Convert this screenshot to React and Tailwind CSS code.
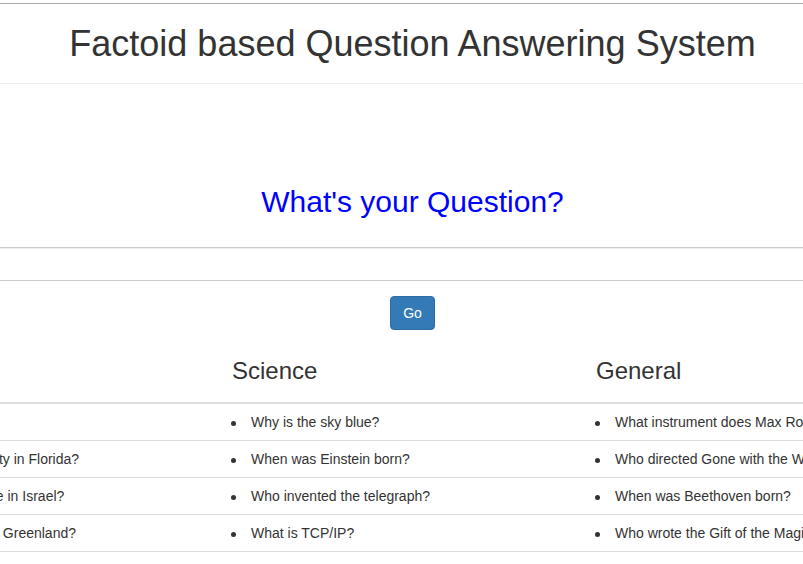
export default function App() {
  const rows = [
    ["Where is Ontario?", "Why is the sky blue?", "What instrument does Max Roach play?"],
    ["What is the largest city in Florida?", "When was Einstein born?", "Who directed Gone with the Wind?"],
    ["What is the time zone in Israel?", "Who invented the telegraph?", "When was Beethoven born?"],
    ["What is the capital of Greenland?", "What is TCP/IP?", "Who wrote the Gift of the Magi?"],
  ];
  const heads = ["Geography", "Science", "General"];
  return (
    <div className="w-[803px] h-[564px] overflow-hidden bg-white text-[#333] font-['Liberation_Sans',Arial,sans-serif] text-[14px]">
      <div className="ml-[-200px] w-[1225px] pt-[3px]">
        <div className="border-t border-[#aaa]">
          <h1 className="mt-[20px] text-[36px] leading-[40px] text-center font-normal">
            Factoid based Question Answering System
          </h1>
          <div className="mt-[19px] border-t border-[#eee]" />
          <h2 className="mt-[101px] text-[30px] leading-[33px] text-center text-[#0000ff] font-normal">
            What's your Question?
          </h2>
          <input
            type="text"
            className="mt-[29px] block w-full h-[34px] border border-[#ccc] rounded-[4px] bg-white shadow-[inset_0_1px_1px_rgba(0,0,0,0.075)] px-3 outline-none"
          />
          <div className="mt-[15px] flex justify-center">
            <button className="h-[34px] px-[12px] bg-[#337ab7] border border-[#2e6da4] rounded-[4px] text-white text-[14px] leading-[20px]">
              Go
            </button>
          </div>
          <div className="ml-[42px] w-[1141px]">
            <div className="grid grid-cols-[382px_364px_395px] border-b-2 border-[#ddd]">
              {heads.map((h) => (
                <div key={h} className="p-2">
                  <h3 className="mt-5 mb-[10px] text-[24px] leading-[26px] font-normal">{h}</h3>
                </div>
              ))}
            </div>
            {rows.map((r, i) => (
              <div key={i} className="grid grid-cols-[382px_364px_395px] border-b border-[#ddd]">
                {r.map((c, j) => (
                  <div key={j} className="py-2 pl-[7px] pr-2 flex items-center whitespace-nowrap">
                    <span className="w-[5px] h-[5px] rounded-full bg-[#333] mt-[2px] shrink-0" />
                    <span className="ml-[15px] leading-[20px]">{c}</span>
                  </div>
                ))}
              </div>
            ))}
          </div>
        </div>
      </div>
    </div>
  );
}
